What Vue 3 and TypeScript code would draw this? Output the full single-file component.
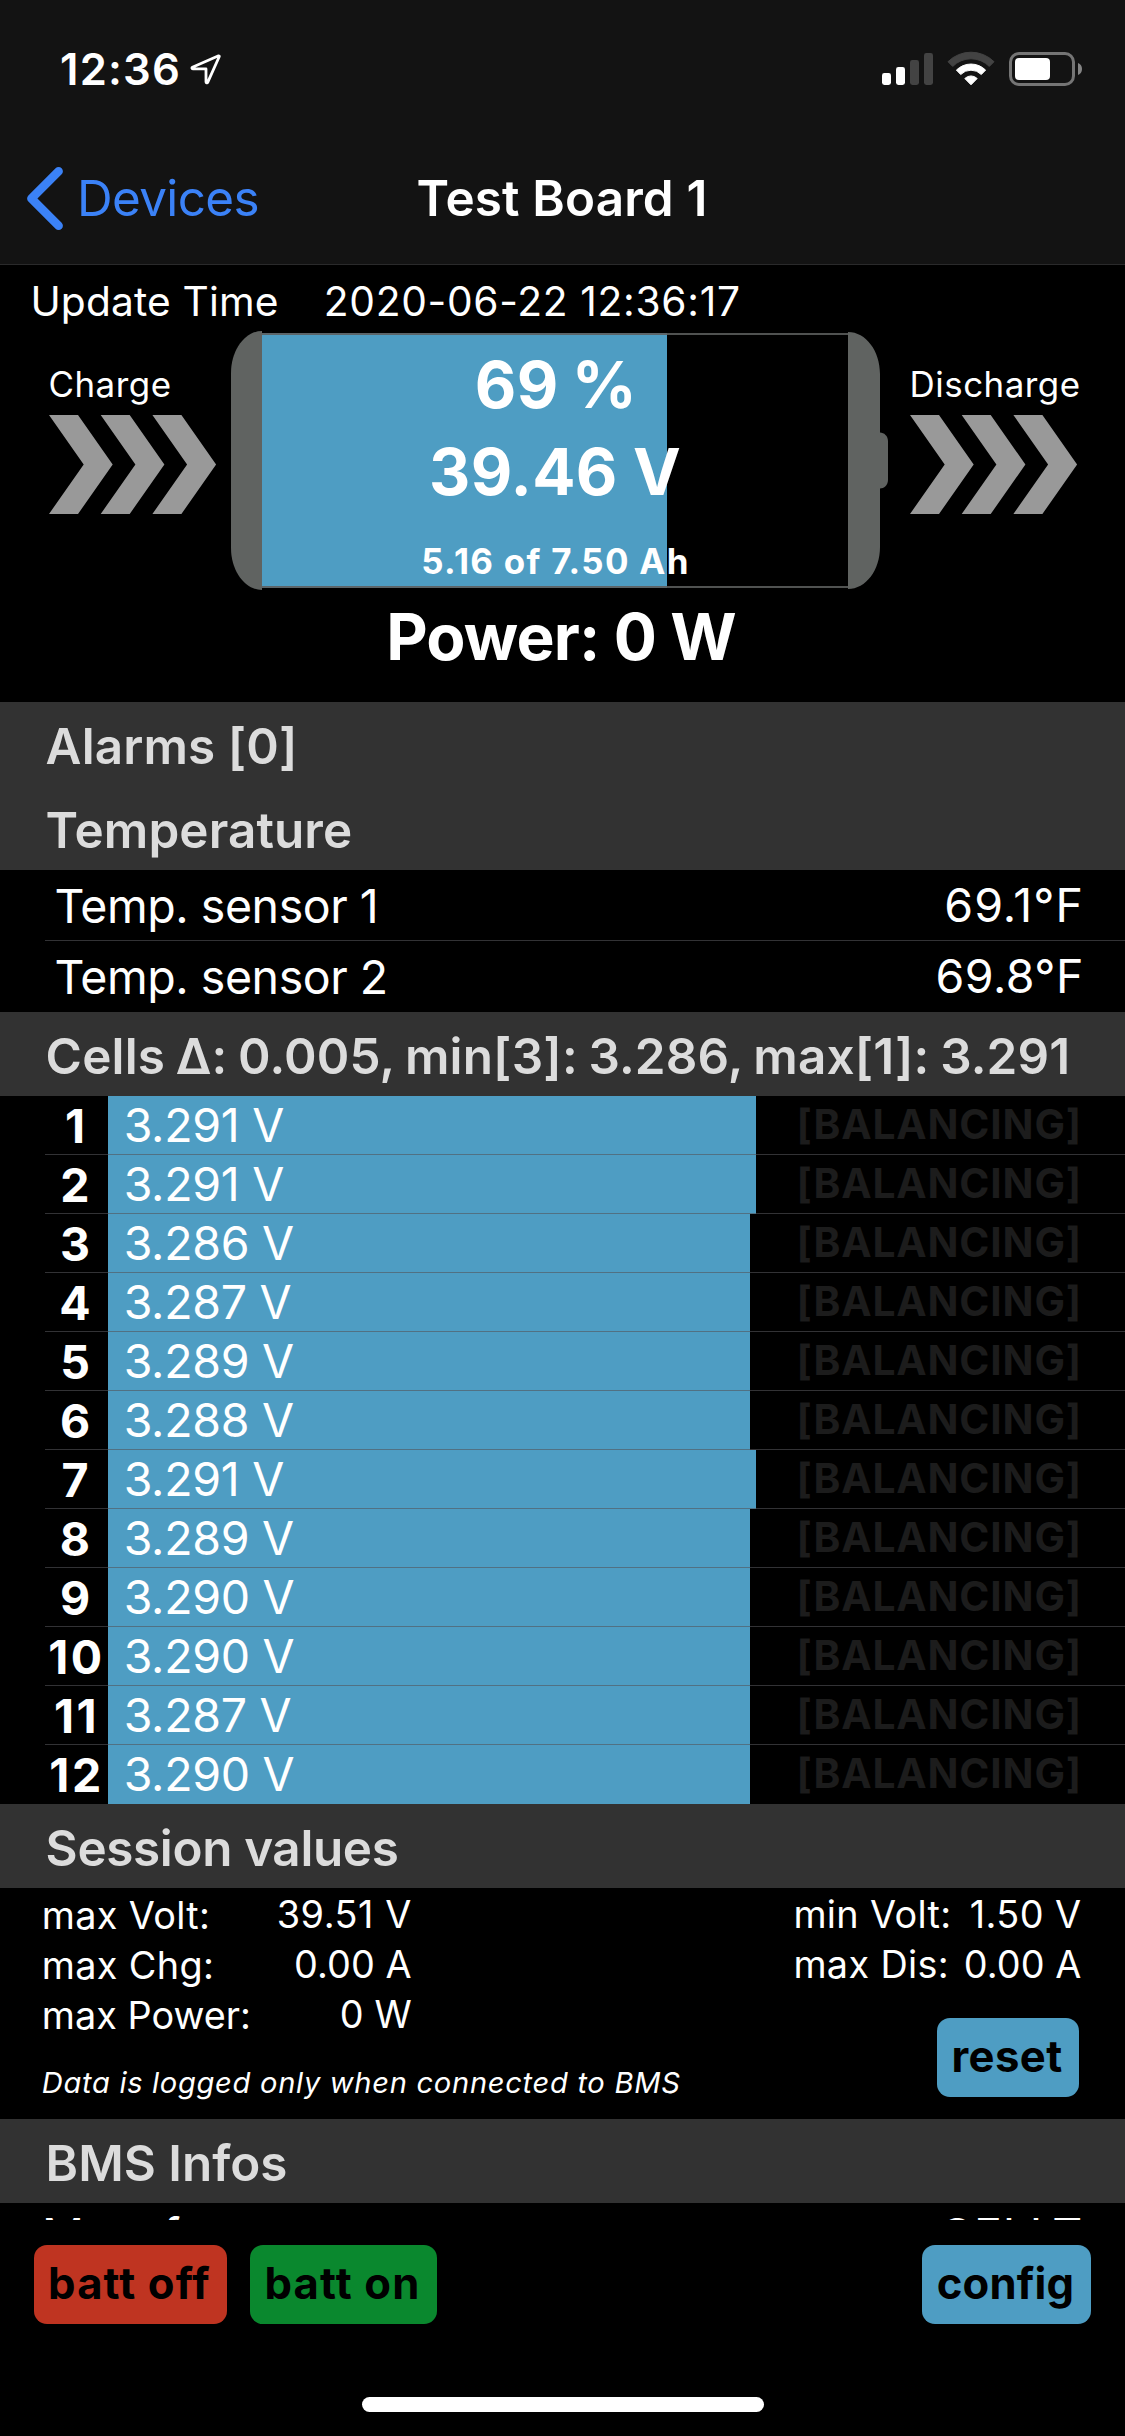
<script setup lang="ts">
interface Cell {
  id: number
  volts: string
  width: number
}

const temperatures = [
  { name: 'Temp. sensor 1', value: '69.1°F' },
  { name: 'Temp. sensor 2', value: '69.8°F' },
]

// Bar width is the filled part of the row in pixels.
const cells: Cell[] = [
  '3.291', '3.291', '3.286', '3.287', '3.289', '3.288',
  '3.291', '3.289', '3.290', '3.290', '3.287', '3.290',
].map((volts, i) => ({ id: i + 1, volts, width: volts === '3.291' ? 648 : 641.5 }))

const sessionLeft = [
  { name: 'max Volt:', value: '39.51 V' },
  { name: 'max Chg:', value: '0.00 A' },
  { name: 'max Power:', value: '0 W' },
]

const sessionRight = [
  { name: 'min Volt:', value: '1.50 V' },
  { name: 'max Dis:', value: '0.00 A' },
]
</script>

<template>
  <div class="screen">
    <header class="top">
      <div class="status">
        <span class="clock">12:36</span>
        <svg class="location" width="34" height="34" viewBox="0 0 34 34">
          <path d="M29.6 3.8 3.4 15.2a.9.9 0 0 0 .4 1.7H17V30a.9.9 0 0 0 1.7.4L30.3 4.5a.6.6 0 0 0-.7-.7Z"
            fill="none" stroke="#fff" stroke-width="2.8" stroke-linejoin="round" />
        </svg>
        <svg class="indicators" width="202" height="36" viewBox="0 0 202 36">
          <rect x="0" y="22" width="9" height="12" rx="2.4" fill="#fff" />
          <rect x="14" y="16" width="9" height="18" rx="2.4" fill="#fff" />
          <rect x="28" y="9" width="9" height="25" rx="2.4" fill="#434343" />
          <rect x="42" y="2" width="9" height="32" rx="2.4" fill="#434343" />
          <path d="M66 10.7a32.6 32.6 0 0 1 46 0l-4.7 4.7a25.8 25.8 0 0 0-36.6 0Z" fill="#434343"
            stroke="#434343" stroke-width="1" stroke-linejoin="round" />
          <path d="M74.4 19.1a20.6 20.6 0 0 1 29.2 0l-4.3 4.4a14.4 14.4 0 0 0-20.6 0Z" fill="#fff"
            stroke="#fff" stroke-width="1" stroke-linejoin="round" />
          <path d="M82.8 27.5a8.8 8.8 0 0 1 12.4 0L89 33.8Z" fill="#fff" stroke="#fff" stroke-width="1"
            stroke-linejoin="round" />
          <rect x="128.5" y="2.5" width="63" height="31" rx="8.5" fill="none" stroke="#757575" stroke-width="3" />
          <rect x="133" y="7" width="35" height="22" rx="4" fill="#fff" />
          <path d="M196 12c2.600 1 4 3.300 4 6s-1.400 5-4 6Z" fill="#858585" />
        </svg>
      </div>
      <nav class="nav">
        <a class="back">
          <svg width="40" height="66" viewBox="0 0 40 66">
            <path d="M33.6 6.200 6.400 33.5 33.6 60.800" fill="none" stroke="#3b82f7" stroke-width="8.600"
              stroke-linecap="round" stroke-linejoin="round" />
          </svg>
          <span>Devices</span>
        </a>
        <h1>Test Board 1</h1>
        <span></span>
      </nav>
    </header>

    <section class="summary">
      <div class="updated">
        <span class="label">Update Time</span>
        <span class="date">2020-06-22 12:36:17</span>
      </div>
      <div class="gauge">
        <div class="flow charge">
          <span>Charge</span>
          <svg width="168" height="99" viewBox="0 0 168 99">
            <path v-for="n in 3" :key="n" :transform="`translate(${(n - 1) * 51.7} 0)`"
              d="M0 0H29L63.700 49.5 29 99H0L34.700 49.5Z" fill="#999" />
          </svg>
        </div>
        <div class="battery">
          <svg class="shell" width="657" height="259" viewBox="0 0 657 259">
            <rect x="30" y="3" width="588" height="253" fill="#000" stroke="#505251" stroke-width="2" />
            <rect x="31" y="4" width="405" height="251" fill="#4e9dc3" />
            <path d="M31 2.900H436M31 256H436" stroke="#5c6569" stroke-width="2" />
            <path d="M31 0C14 0 0 19 0 42V217C0 240 14 259 31 259Z" fill="#606361" />
            <path d="M617 1C635 1 649 20 649 43V101.500C653 101.500 657 105 657 110V149C657 154 653 157.500 649 157.500V216C649 239 635 258 617 258Z" fill="#606361" />
          </svg>
          <div class="readings">
            <strong class="soc">69 %</strong>
            <strong class="volts">39.46 V</strong>
            <strong class="capacity">5.16 of 7.50 Ah</strong>
          </div>
        </div>
        <div class="flow discharge">
          <span>Discharge</span>
          <svg width="168" height="99" viewBox="0 0 168 99">
            <path v-for="n in 3" :key="n" :transform="`translate(${(n - 1) * 51.7} 0)`"
              d="M0 0H29L63.700 49.5 29 99H0L34.700 49.5Z" fill="#999" />
          </svg>
        </div>
      </div>
      <strong class="power">Power: 0 W</strong>
    </section>

    <main class="content">
      <h2 class="even">Alarms [0]</h2>
      <h2 class="even">Temperature</h2>
      <div v-for="t in temperatures" :key="t.name" class="temp">
        <span class="name">{{ t.name }}</span>
        <span class="value">{{ t.value }}</span>
      </div>

      <h2 class="cells-title">Cells Δ: 0.005, min[3]: 3.286, max[1]: 3.291</h2>
      <div v-for="c in cells" :key="c.id" class="cell">
        <span class="index" :class="{ two: c.id > 9 }">{{ c.id }}</span>
        <div class="bar" :style="{ width: c.width + 'px' }">{{ c.volts }} V</div>
        <span class="balancing">[BALANCING]</span>
      </div>

      <h2 class="session-title">Session values</h2>
      <div class="session">
        <div class="left">
          <div v-for="s in sessionLeft" :key="s.name" class="stat">
            <span>{{ s.name }}</span><span class="num">{{ s.value }}</span>
          </div>
          <em>Data is logged only when connected to BMS</em>
        </div>
        <div class="right">
          <div v-for="s in sessionRight" :key="s.name" class="stat">
            <span>{{ s.name }}</span><span class="num">{{ s.value }}</span>
          </div>
          <button class="btn blue reset">reset</button>
        </div>
      </div>

      <h2>BMS Infos</h2>
      <div class="info">
        <span>Manufacturer</span>
        <span class="maker">CELLT</span>
      </div>
    </main>

    <footer class="actions">
      <div class="buttons">
        <button class="btn red">batt off</button>
        <button class="btn green">batt on</button>
        <button class="btn blue config">config</button>
      </div>
      <div class="home"></div>
    </footer>
  </div>
</template>

<style>
html,
body {
  margin: 0;
  background: #000;
}
</style>

<style scoped>
.screen {
  width: 1125px;
  height: 2436px;
  display: flex;
  flex-direction: column;
  overflow: hidden;
  background: #000;
  color: #fff;
  font-family: Inter, "Liberation Sans", sans-serif;
}

/* Status and navigation bars */
.top {
  flex: none;
  background: #131313;
  border-bottom: 1px solid #2a2a2b;
}

.status {
  box-sizing: border-box;
  height: 132px;
  padding: 6px 41px 0 60px;
  display: flex;
  align-items: center;
}

.clock {
  width: 129px;
  font-size: 43.6px;
  font-weight: 600;
  letter-spacing: 1.2px;
}

.location {
  margin-bottom: 1px;
}

.indicators {
  margin-left: auto;
}

.nav {
  height: 132px;
  display: grid;
  grid-template-columns: 1fr auto 1fr;
  align-items: center;
}

.back {
  display: flex;
  align-items: center;
  gap: 12px;
  padding-left: 25px;
  color: #3b82f7;
  font-size: 49.4px;
  letter-spacing: -0.62px;
}

h1 {
  margin: 0 1px 0 0;
  font-size: 49.4px;
  font-weight: 600;
  letter-spacing: 0.15px;
}

/* Pack summary */
.summary {
  flex: none;
  height: 437px;
}

.updated {
  display: flex;
  box-sizing: border-box;
  padding: 7px 0 0 30.4px;
  height: 66px;
  line-height: 60px;
  font-size: 40.7px;
}

.updated .label {
  width: 293.4px;
  letter-spacing: 0.16px;
}

.updated .date {
  letter-spacing: 0.69px;
}

.gauge {
  display: flex;
  height: 259px;
}

.flow {
  display: flex;
  flex-direction: column;
  gap: 12px;
  padding-top: 35px;
  font-size: 34.9px;
  line-height: 37px;
  letter-spacing: 0.5px;
}

.charge {
  width: 182.5px;
  padding-left: 48.5px;
}

.discharge {
  padding-left: 21.6px;
}

.battery {
  position: relative;
  width: 657px;
}

.shell {
  position: absolute;
  inset: 0;
}

.readings {
  position: relative;
  width: 648px;
  padding-top: 11px;
  display: flex;
  flex-direction: column;
  text-align: center;
}

.soc,
.volts,
.power {
  font-size: 64px;
  font-weight: 700;
}

.soc {
  line-height: 86px;
  letter-spacing: 0.4px;
  word-spacing: -2.5px;
  padding-left: 2px;
}

.volts {
  line-height: 88px;
  letter-spacing: 0.24px;
}

.capacity {
  margin-top: 16px;
  padding-left: 1px;
  font-size: 34.9px;
  line-height: 58px;
  letter-spacing: 1.31px;
}

.power {
  display: block;
  padding-right: 3px;
  line-height: 94px;
  text-align: center;
  letter-spacing: -0.86px;
}

/* Sections */
.content {
  flex: none;
}

h2 {
  box-sizing: border-box;
  height: 84px;
  margin: 0;
  padding: 4px 0 0 45.6px;
  background: #323232;
  color: #dcdcdc;
  font-size: 49.4px;
  font-weight: 600;
  line-height: 80px;
  white-space: nowrap;
}

.even {
  letter-spacing: 0.12px;
}

.cells-title {
  letter-spacing: 0.17px;
  word-spacing: -2px;
}

.session-title {
  letter-spacing: -0.34px;
}

.temp {
  position: relative;
  display: flex;
  justify-content: space-between;
  height: 71px;
  padding: 0 41px 0 54.4px;
  font-size: 46.5px;
  line-height: 70px;
}

.temp .name {
  padding-top: 1px;
  letter-spacing: -0.45px;
}

.temp .value {
  letter-spacing: 0.5px;
}

.temp:nth-of-type(1) .value {
  letter-spacing: 1.05px;
}

.temp:nth-of-type(1)::after,
.cell:not(:has(+ h2))::after {
  content: "";
  position: absolute;
  left: 45px;
  right: 0;
  bottom: 0;
  height: 1px;
  background: rgba(84, 84, 88, 0.6);
}

.cell {
  position: relative;
  display: flex;
  height: 59px;
  font-size: 46.5px;
  line-height: 58px;
}

.index {
  box-sizing: border-box;
  width: 108px;
  padding: 1px 0 0 42px;
  text-align: center;
  font-weight: 700;
}

.index.two {
  padding-left: 45px;
  letter-spacing: 2.5px;
}

.bar {
  box-sizing: border-box;
  height: 59px;
  padding-left: 15.7px;
  background: #4e9dc3;
  letter-spacing: -0.3px;
}

.balancing {
  margin-left: auto;
  padding-right: 43px;
  color: #1c1c1c;
  font-size: 40.7px;
  font-weight: 700;
  letter-spacing: 0.85px;
}

/* Session statistics */
.session {
  box-sizing: border-box;
  height: 231px;
  padding: 2px 43.5px 0 41.8px;
  display: flex;
  justify-content: space-between;
  font-size: 37.8px;
  line-height: 50px;
  letter-spacing: 0.35px;
}

.stat {
  display: flex;
  justify-content: space-between;
  height: 50px;
}

.stat .num {
  line-height: 48px;
  letter-spacing: 0.1px;
}

.left .stat {
  width: 370px;
}

.left .stat:nth-child(1) .num {
  letter-spacing: 0.55px;
}

.left .stat:nth-child(3) {
  letter-spacing: 0.03px;
}

.right {
  width: 288.1px;
  line-height: 48px;
}

.right .stat:nth-child(1) .num {
  letter-spacing: 0.4px;
}

em {
  display: block;
  margin-top: 23px;
  font-size: 29.1px;
  line-height: 40px;
  letter-spacing: 0.7px;
}

.info {
  display: flex;
  justify-content: space-between;
  height: 17px;
  overflow: hidden;
  padding: 0 42px;
  font-size: 46.5px;
  line-height: 64px;
  letter-spacing: -0.5px;
}

.maker {
  letter-spacing: 0.7px;
}

/* Buttons */
.btn {
  box-sizing: border-box;
  height: 79px;
  padding: 0 2px 2px 0;
  border: 0;
  border-radius: 13px;
  color: #000;
  font: 700 43.6px/77px Inter, "Liberation Sans", sans-serif;
  letter-spacing: 1.15px;
}

.blue {
  background: #4e9dc3;
}

.red {
  width: 193px;
  background: #bf3421;
}

.green {
  width: 187px;
  margin-left: 23px;
  background: #0a882e;
}

.reset {
  display: block;
  width: 142px;
  margin: 28px 2.500px 0 auto;
  letter-spacing: 0.44px;
}

.config {
  width: 169px;
  margin-left: auto;
  letter-spacing: 0.19px;
}

.actions {
  flex: 1;
  display: flex;
  flex-direction: column;
  justify-content: space-between;
  align-items: center;
  padding: 25px 34px 24px;
}

.buttons {
  display: flex;
  width: 100%;
}

.home {
  width: 402px;
  height: 15px;
  border-radius: 8px;
  background: #fff;
}
</style>
